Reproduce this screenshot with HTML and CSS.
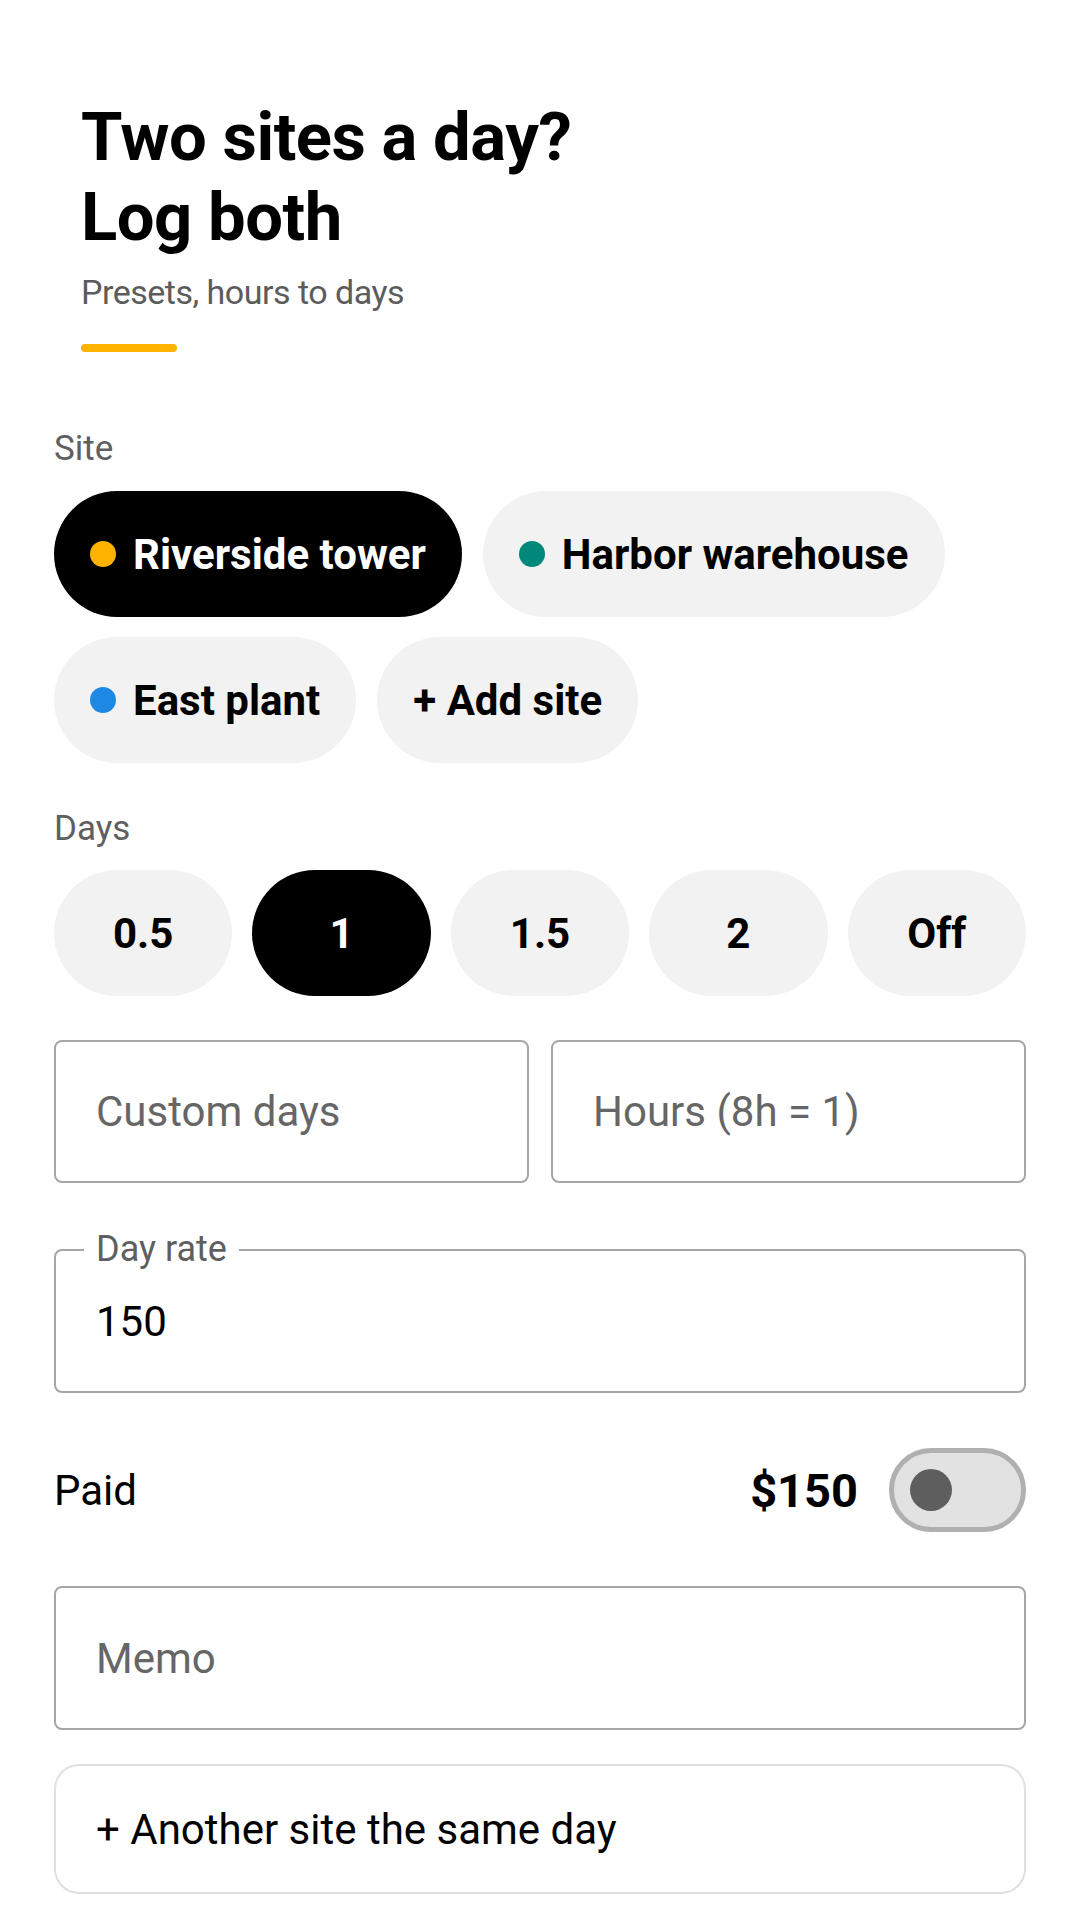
FILE: index.html
```html
<!DOCTYPE html>
<html lang="en">
<head>
  <meta charset="UTF-8">
  <meta name="viewport" content="width=device-width, initial-scale=1.0">
  <title>Log day</title>
  <link rel="stylesheet" href="styles.css">
</head>
<body>

<main class="page">
  <!-- Header -->
  <header class="hero">
    <h1>Two sites a day?<br>Log both</h1>
    <p class="subtitle">Presets, hours to days</p>
    <div class="accent"></div>
  </header>

  <!-- Site picker -->
  <section class="group site-group">
    <div class="label">Site</div>
    <div class="chips">
      <button class="chip selected"><span class="dot amber"></span>Riverside tower</button>
      <button class="chip"><span class="dot teal"></span>Harbor warehouse</button>
      <button class="chip"><span class="dot blue"></span>East plant</button>
      <button class="chip">+ Add site</button>
    </div>
  </section>

  <!-- Days presets -->
  <section class="group days-group">
    <div class="label">Days</div>
    <div class="days">
      <button class="day">0.5</button>
      <button class="day selected">1</button>
      <button class="day">1.5</button>
      <button class="day">2</button>
      <button class="day">Off</button>
    </div>
  </section>

  <div class="field-row">
    <input class="field" type="text" placeholder="Custom days">
    <input class="field" type="text" placeholder="Hours (8h = 1)">
  </div>

  <div class="outlined">
    <label for="day-rate">Day rate</label>
    <input class="field" id="day-rate" type="text" value="150">
  </div>

  <div class="paid-row">
    <span class="paid-label">Paid</span>
    <span class="amount">$150</span>
    <span class="switch"><span class="thumb"></span></span>
  </div>

  <input class="field memo" type="text" placeholder="Memo">

  <button class="another">+ Another site the same day</button>
</main>

</body>
</html>
```

FILE: styles.css
```css
/* General Styles */
* {
  margin: 0;
  padding: 0;
  box-sizing: border-box;
}

body {
  font-family: Roboto, "Liberation Sans", sans-serif;
  background-color: #fff;
  color: #000;
  width: 1080px;
}

button, input {
  font-family: inherit;
  color: inherit;
  border: none;
  background: none;
  outline: none;
}

.page {
  padding: 0 54px;
}

/* Header */
.hero {
  padding: 97px 27px 0;
  letter-spacing: -0.5px;
}

.hero h1 {
  font-size: 67px;
  line-height: 80px;
  font-weight: 700;
}

.subtitle {
  margin-top: 13px;
  font-size: 34px;
  line-height: 44px;
  color: #5c5c5c;
}

.accent {
  margin-top: 30px;
  width: 96px;
  height: 8px;
  border-radius: 4px;
  background-color: #ffb300;
}

/* Groups */
.label {
  font-size: 35px;
  line-height: 44px;
  color: #5f5f5f;
}

.site-group {
  margin-top: 75px;
}

.days-group {
  margin-top: 44px;
}

.chips {
  display: flex;
  flex-wrap: wrap;
  gap: 20px 21px;
  margin-top: 20px;
}

.chip {
  display: inline-flex;
  align-items: center;
  gap: 17px;
  height: 126px;
  padding: 0 36px;
  border-radius: 63px;
  background-color: #f2f2f2;
  font-size: 42px;
  font-weight: 700;
}

.chip.selected, .day.selected {
  background-color: #000;
  color: #fff;
}

.dot {
  width: 26px;
  height: 26px;
  border-radius: 50%;
}

.dot.amber { background-color: #ffb300; }
.dot.teal { background-color: #00897b; }
.dot.blue { background-color: #1e88e5; }

.days {
  display: flex;
  gap: 20px;
  margin-top: 19px;
}

.day {
  flex: 1;
  height: 126px;
  border-radius: 63px;
  background-color: #f2f2f2;
  font-size: 42px;
  font-weight: 700;
}

/* Text fields */
.field {
  width: 100%;
  height: 144px;
  padding: 0 40px;
  border: 2px solid #a6a6a6;
  border-radius: 8px;
  font-size: 42px;
  background-color: #fff;
}

.field::placeholder {
  color: #666;
}

.field-row {
  display: flex;
  gap: 22px;
  margin-top: 44px;
}

.field-row .field {
  height: 143px;
}

.outlined {
  position: relative;
  margin-top: 66px;
}

.outlined label {
  position: absolute;
  left: 30px;
  top: -22px;
  padding: 0 12px;
  background-color: #fff;
  font-size: 36px;
  line-height: 44px;
  color: #5f5f5f;
}

/* Paid row */
.paid-row {
  display: flex;
  align-items: center;
  height: 84px;
  margin-top: 55px;
}

.paid-label {
  flex: 1;
  font-size: 42px;
}

.amount {
  font-size: 47px;
  font-weight: 700;
  margin-right: 31px;
}

.switch {
  display: flex;
  align-items: center;
  width: 137px;
  height: 84px;
  padding-left: 16px;
  border: 5px solid #b0b0b0;
  border-radius: 42px;
  background-color: #e2e2e2;
}

.thumb {
  width: 42px;
  height: 42px;
  border-radius: 50%;
  background-color: #5e5e5e;
}

.memo {
  display: block;
  margin-top: 54px;
}

.another {
  display: block;
  width: 100%;
  height: 130px;
  margin-top: 34px;
  padding: 0 40px;
  border: 2px solid #e0e0e0;
  border-radius: 25px;
  text-align: left;
  font-size: 42px;
}
```
